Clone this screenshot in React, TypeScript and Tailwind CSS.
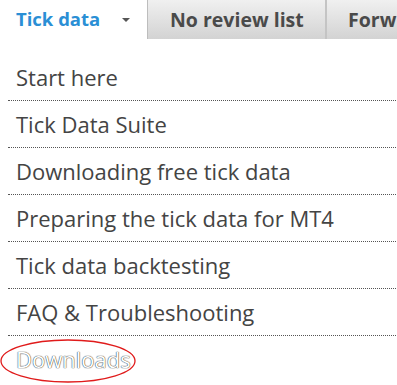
import React from 'react';

const items = [
  'Start here',
  'Tick Data Suite',
  'Downloading free tick data',
  'Preparing the tick data for MT4',
  'Tick data backtesting',
  'FAQ & Troubleshooting',
];

const App: React.FC = () => {
  return (
    <div className="w-[397px] h-[385px] overflow-hidden bg-white font-['Open_Sans','Noto_Sans',sans-serif]">
      {/* tab strip */}
      <div className="flex h-[39px] w-[520px]">
        <div className="flex w-[147px] items-center bg-white pl-4 pr-[17px]">
          <span className="text-[18.5px] font-bold text-[#2b8fd5] leading-none">Tick data</span>
          <span className="ml-auto h-0 w-0 border-x-[4px] border-t-[4px] border-x-transparent border-t-[#555]" />
        </div>
        <div className="flex w-[179px] items-center border-l border-l-[#bdbdbd] border-r border-r-[#c4c4c4] bg-gradient-to-b from-[#f0f0f0] to-[#d3d3d3] pl-[22px]">
          <span className="text-[19.5px] font-bold text-[#4a4a4a] leading-none">No review list</span>
        </div>
        <div className="flex w-[180px] items-center border-l border-l-[#c4c4c4] bg-gradient-to-b from-[#f0f0f0] to-[#d3d3d3] pl-[21px]">
          <span className="text-[19.5px] font-bold text-[#4a4a4a] leading-none">Forw</span>
        </div>
      </div>

      {/* menu list */}
      <ul className="ml-2 mt-[15px] w-[388px]">
        {items.map((label) => (
          <li
            key={label}
            className="flex h-[47px] items-center border-b border-dotted border-b-[#555] pl-2 text-[22px] text-[#444]"
          >
            {label}
          </li>
        ))}
        <li className="relative flex h-[47px] items-center pl-2 text-[22px] text-white [text-shadow:0_0_1px_#222,0_0_1px_#555]">
          Downloads
          <svg className="absolute left-[-8px] top-[3px]" width="140" height="46" viewBox="0 0 140 46">
            <ellipse cx="68" cy="22" rx="67" ry="21" fill="none" stroke="#e01b1b" strokeWidth="1.3" />
          </svg>
        </li>
      </ul>
    </div>
  );
};

export default App;
